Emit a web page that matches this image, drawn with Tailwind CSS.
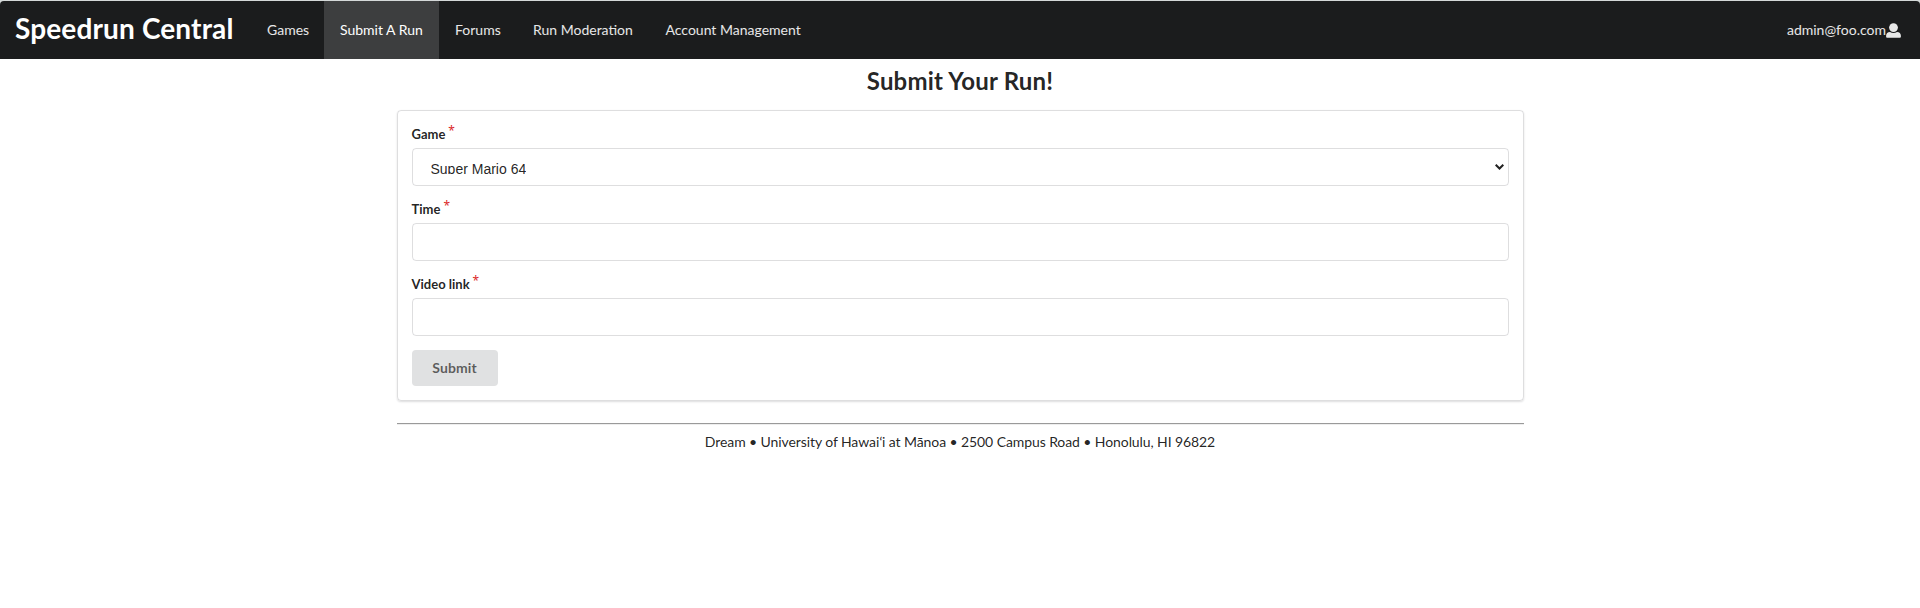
<!DOCTYPE html>
<html lang="en">
<head>
<meta charset="utf-8">
<title>Speedrun Central</title>
<script src="https://cdn.jsdelivr.net/npm/@tailwindcss/browser@4"></script>
</head>
<body class="bg-white font-['Lato',sans-serif] text-sm leading-5 text-black/87">
<div class="bg-[#d4d8d8] pt-px">
<nav class="flex h-[58px] items-stretch rounded-t-[4px] bg-[#1b1c1d] text-white/90">
  <a class="flex w-[250px] items-center whitespace-nowrap pl-[15px] text-[28px] font-bold leading-9 tracking-[0.14px] text-white"><span class="-mt-1">Speedrun Central</span></a>
  <a class="flex w-[74px] items-center pl-[17px]">Games</a>
  <a class="flex w-[115px] items-center bg-[#3d3e3f] pl-4 text-white">Submit A Run</a>
  <a class="flex w-[79px] items-center pl-4">Forums</a>
  <a class="flex w-[131px] items-center pl-[15px]">Run Moderation</a>
  <a class="flex items-center pl-[16.5px]">Account Management</a>
  <div class="ml-auto flex items-center pr-[19px]"><span>admin@foo.com</span>
    <svg width="15" height="15" viewBox="0 0 15 15" fill="currentColor"><circle cx="7.5" cy="4.6" r="4.4"/><path d="M4 8.9c2 1.4 5 1.4 7 0 2.4.2 3.9 1.5 3.9 3.8v.7c0 .8-.5 1.3-1.3 1.3H1.4c-.8 0-1.3-.5-1.3-1.3v-.7C.1 10.400 1.600 9.100 4 8.900z"/></svg>
  </div>
</nav>
</div>
<main class="mx-auto w-[1127px]">
  <h2 class="pt-[6px] text-center text-2xl leading-[31px] font-bold tracking-[0.2px]">Submit Your Run!</h2>
  <form class="mt-[14px] h-[291px] rounded-[4px] border border-[#222426]/15 px-[14px] pt-[14px] shadow-[0_1px_2px_0_rgba(34,36,38,0.15)]">
    <div class="h-[75px]">
      <label class="flex h-[23px] text-[13px] leading-[18px] font-bold"><span>Game</span><span class="-mt-[2px] ml-[3px] font-['Noto_Sans',sans-serif] text-[12px] leading-4 font-normal text-[#db2828]">*</span></label>
      <div class="flex h-[38px] items-start justify-between rounded-[4px] border border-[#222426]/15 pr-[4px] pl-[18px]">
        <div class="mt-[12px] h-[13px] overflow-hidden font-['Liberation_Sans',Arial,sans-serif] leading-[17px]">Super Mario 64</div>
        <svg class="mt-[15px]" width="9" height="6" viewBox="0 0 9 6" fill="none" stroke="#222" stroke-width="2"><path d="M.7.7l3.800 3.800L8.300.7"/></svg>
      </div>
    </div>
    <div class="h-[75px]">
      <label class="flex h-[23px] text-[13px] leading-[18px] font-bold"><span>Time</span><span class="-mt-[2px] ml-[3px] font-['Noto_Sans',sans-serif] text-[12px] leading-4 font-normal text-[#db2828]">*</span></label>
      <input class="block h-[38px] w-full rounded-[4px] border border-[#222426]/15 px-4">
    </div>
    <div class="h-[75px]">
      <label class="flex h-[23px] text-[13px] leading-[18px] font-bold"><span>Video link</span><span class="-mt-[2px] ml-[3px] font-['Noto_Sans',sans-serif] text-[12px] leading-4 font-normal text-[#db2828]">*</span></label>
      <input class="block h-[38px] w-full rounded-[4px] border border-[#222426]/15 px-4">
    </div>
    <button type="button" class="block h-9 w-[86px] rounded-[4px] bg-[#e0e1e2] text-sm leading-[14px] font-bold tracking-[0.1px] text-black/60">Submit</button>
  </form>
  <hr class="mt-[22px] h-[2px] border-0 border-t border-b border-t-[#9a9a9a] border-b-[#eeeeee]">
  <footer class="mt-[7px] text-center tracking-[-0.09px]">Dream • University of Hawaiʻi at Mānoa • 2500 Campus Road • Honolulu, HI 96822</footer>
</main>
</body>
</html>
